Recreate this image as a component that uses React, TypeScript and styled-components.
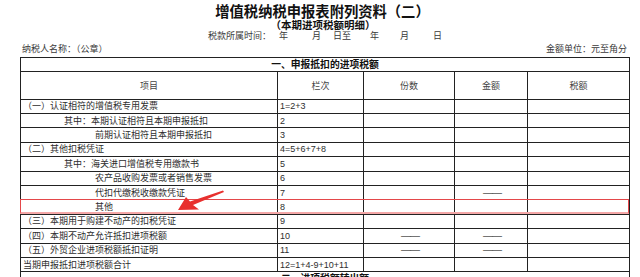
import styled, { createGlobalStyle } from "styled-components";

const GlobalStyle = createGlobalStyle`
  html, body {
    margin: 0;
    padding: 0;
    background: #fff;
    overflow: hidden;
  }
  body {
    font-family: "Liberation Sans", "Noto Sans CJK SC", sans-serif;
    color: #333;
  }
`;

const Page = styled.div`
  position: relative;
  width: 640px;
  height: 277px;
  overflow: hidden;
  box-sizing: border-box;
  padding: 3px 11px 0 20px;
`;

const Title = styled.h1`
  margin: 0;
  padding-right: 4px;
  font-family: "Noto Sans CJK SC", sans-serif;
  font-size: 14.3px;
  line-height: 16px;
  font-weight: 700;
  text-align: center;
  color: #111;
`;

const SubTitle = styled.h2`
  margin: 0;
  padding-right: 3px;
  font-family: "Noto Sans CJK SC", sans-serif;
  font-size: 10.5px;
  line-height: 12px;
  font-weight: 700;
  text-align: center;
  color: #111;
`;

const Period = styled.div`
  display: flex;
  padding-left: 188px;
  font-size: 9px;
  line-height: 11px;
  color: #3a3a3a;
`;

const Slot = styled.span<{ $gap: number }>`
  margin-left: ${(p) => p.$gap}px;
`;

const InfoRow = styled.div`
  display: flex;
  justify-content: space-between;
  padding: 2px 2px 0;
  margin-bottom: 2px;
  font-size: 9px;
  line-height: 11px;
  color: #3a3a3a;
`;

const Table = styled.table`
  width: 609px;
  border-collapse: collapse;
  table-layout: fixed;
  font-size: 9px;
  color: #2e2e2e;
`;

const Row = styled.tr<{ $h: number }>`
  height: ${(p) => p.$h}px;
`;

const Cell = styled.td<{ $indent?: number; $center?: boolean }>`
  position: relative;
  border: 1px solid #222;
  padding: 0 0 0 ${(p) => p.$indent ?? 2}px;
  line-height: 10px;
  white-space: nowrap;
  overflow: visible;
  text-align: ${(p) => (p.$center ? "center" : "left")};
  vertical-align: middle;
`;

const Section = styled.td`
  border: 1px solid #222;
  padding: 0;
  font-size: 9.8px;
  line-height: 11px;
  font-weight: 700;
  color: #111;
  text-align: center;
  vertical-align: middle;
`;

const HeadCell = styled.th`
  border: 1px solid #222;
  padding: 0;
  font-weight: 400;
  font-size: 9px;
  color: #444;
  text-align: center;
  vertical-align: middle;
`;

const Dash = styled.span`
  font-size: 10px;
  color: #555;
  letter-spacing: -1px;
`;

const Highlight = styled.div`
  position: absolute;
  left: -1px;
  top: -1px;
  width: 609px;
  height: calc(100% + 1px);
  box-sizing: border-box;
  border: 1px solid #e4474a;
  border-bottom: 2px solid #f4a7a7;
  pointer-events: none;
`;

const Arrow = styled.svg`
  position: absolute;
  left: 0;
  top: 0;
  pointer-events: none;
`;

type Line = {
  item: string;
  indent: number;
  code: string;
  copies?: boolean;
  amount?: boolean;
  marked?: boolean;
};

const lines: Line[] = [
  { item: "（一）认证相符的增值税专用发票", indent: 2, code: "1=2+3" },
  { item: "其中：本期认证相符且本期申报抵扣", indent: 43, code: "2" },
  { item: "前期认证相符且本期申报抵扣", indent: 74, code: "3" },
  { item: "（二）其他扣税凭证", indent: 2, code: "4=5+6+7+8" },
  { item: "其中：海关进口增值税专用缴款书", indent: 43, code: "5" },
  { item: "农产品收购发票或者销售发票", indent: 74, code: "6" },
  { item: "代扣代缴税收缴款凭证", indent: 74, code: "7", amount: true },
  { item: "其他", indent: 74, code: "8", marked: true },
  { item: "（三）本期用于购建不动产的扣税凭证", indent: 2, code: "9" },
  { item: "（四）本期不动产允许抵扣进项税额", indent: 2, code: "10", copies: true, amount: true },
  { item: "（五）外贸企业进项税额抵扣证明", indent: 2, code: "11", copies: true, amount: true },
  { item: "当期申报抵扣进项税额合计", indent: 2, code: "12=1+4-9+10+11" },
];

export default function App() {
  return (
    <>
      <GlobalStyle />
      <Page>
        <Title>增值税纳税申报表附列资料（二）</Title>
        <SubTitle>（本期进项税额明细）</SubTitle>
        <Period>
          <span>税款所属时间：</span>
          <Slot $gap={8}>年</Slot>
          <Slot $gap={24}>月</Slot>
          <Slot $gap={12}>日至</Slot>
          <Slot $gap={19}>年</Slot>
          <Slot $gap={21}>月</Slot>
          <Slot $gap={24}>日</Slot>
        </Period>
        <InfoRow>
          <span>纳税人名称：（公章）</span>
          <span>金额单位：元至角分</span>
        </InfoRow>
        <Table>
          <colgroup>
            <col style={{ width: 257 }} />
            <col style={{ width: 86 }} />
            <col style={{ width: 91 }} />
            <col style={{ width: 73 }} />
            <col style={{ width: 102 }} />
          </colgroup>
          <tbody>
            <Row $h={13.5}>
              <Section colSpan={5}>一、申报抵扣的进项税额</Section>
            </Row>
            <Row $h={28}>
              <HeadCell>项目</HeadCell>
              <HeadCell>栏次</HeadCell>
              <HeadCell>份数</HeadCell>
              <HeadCell>金额</HeadCell>
              <HeadCell>税额</HeadCell>
            </Row>
            {lines.map((l) => (
              <Row $h={14.42} key={l.code}>
                <Cell $indent={l.indent}>
                  {l.item}
                  {l.marked && <Highlight />}
                </Cell>
                <Cell>{l.code}</Cell>
                <Cell $center>{l.copies && <Dash>——</Dash>}</Cell>
                <Cell $center>{l.amount && <Dash>——</Dash>}</Cell>
                <Cell />
              </Row>
            ))}
            <Row $h={14}>
              <Section colSpan={5}>二、进项税额转出额</Section>
            </Row>
          </tbody>
        </Table>
        <Arrow width={640} height={277} viewBox="0 0 640 277">
          <polygon
            points="178,210 186,197 190,201.5 223,190.5 224,192 193,205 199,209.5"
            fill="#e8302e"
          />
        </Arrow>
      </Page>
    </>
  );
}
